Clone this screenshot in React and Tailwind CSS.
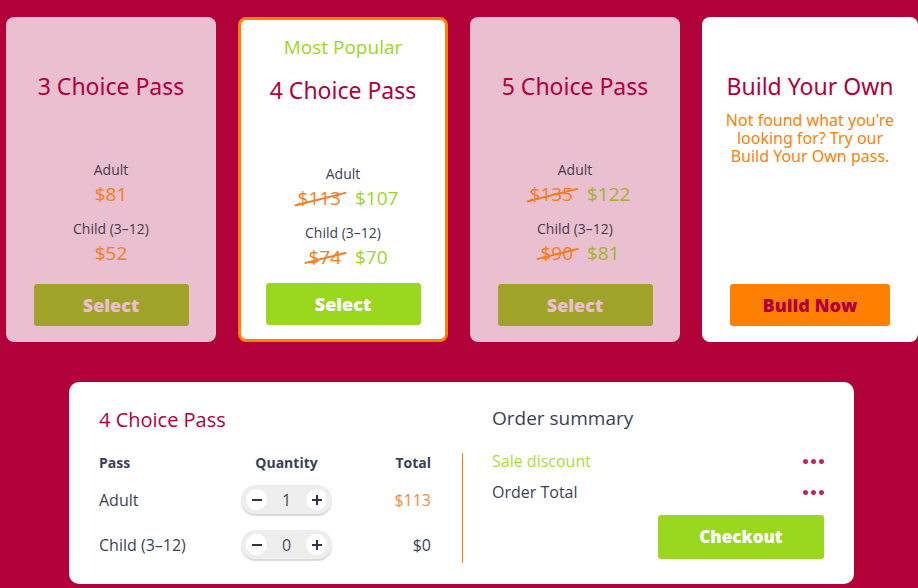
import React from 'react';

const body = { fontFamily: '"Open Sans", "Liberation Sans", sans-serif' };
const head = { fontFamily: '"Noto Sans", "Open Sans", sans-serif' };

const Struck = ({ children }) => (
    <span className="relative inline-block text-[#f57c20]">
        {children}
        <span className="absolute left-[-4px] right-[-6px] top-1/2 h-[2px] bg-[#f57c20] -rotate-[14deg]" />
    </span>
);

const PriceRow = ({ old, now, nowColor }) => (
    <div className={`flex items-center justify-center gap-[14px] text-[19px] leading-[24px] ${old ? 'pl-[10px]' : ''}`}>
        {old && <Struck>{old}</Struck>}
        <span className={nowColor}>{now}</span>
    </div>
);

const Stepper = ({ value }) => (
    <div className="w-[91px] h-[29px] rounded-full bg-[#eeeeee] shadow-[0_2px_1px_rgba(0,0,0,0.15)] flex items-center justify-between px-[5px]">
        <span className="w-[21px] h-[21px] rounded-full bg-white flex items-center justify-center">
            <span className="w-[10px] h-[2px] bg-[#2f3446]" />
        </span>
        <span className="text-[16px] text-[#4a4e63]">{value}</span>
        <span className="w-[21px] h-[21px] rounded-full bg-white flex items-center justify-center relative">
            <span className="w-[10px] h-[2px] bg-[#2f3446]" />
            <span className="absolute w-[2px] h-[10px] bg-[#2f3446]" />
        </span>
    </div>
);

const Dots = () => (
    <div className="flex gap-[3px]">
        <span className="w-[5px] h-[5px] rounded-full bg-[#c2255c]" />
        <span className="w-[5px] h-[5px] rounded-full bg-[#c2255c]" />
        <span className="w-[5px] h-[5px] rounded-full bg-[#c2255c]" />
    </div>
);

export default function App() {
    return (
        <div className="w-[918px] h-[588px] bg-[#b2003b] overflow-hidden" style={body}>
            <div className="flex gap-[22px] pl-[6px] pt-[17px]">
                {/* 3 Choice */}
                <div className="w-[210px] h-[325px] rounded-[8px] bg-[#eabfcf] flex flex-col items-center pt-[54px]">
                    <div className="text-[23px] leading-[30px] text-[#b2003b]" style={head}>3 Choice Pass</div>
                    <div className="mt-[60px] text-[14px] leading-[18px] text-[#4a3a4a]">Adult</div>
                    <div className="mt-[3px]"><PriceRow now="$81" nowColor="text-[#f57c20]" /></div>
                    <div className="mt-[14px] text-[14px] leading-[18px] text-[#4a3a4a]">Child (3–12)</div>
                    <div className="mt-[3px]"><PriceRow now="$52" nowColor="text-[#f57c20]" /></div>
                    <button className="mt-[19px] w-[155px] h-[42px] rounded-[3px] bg-[#a0a329] text-[#eac0cf] text-[18px] font-extrabold">Select</button>
                </div>

                {/* 4 Choice */}
                <div className="w-[210px] h-[325px] rounded-[8px] bg-white border-[3px] border-[#ff8000] flex flex-col items-center pt-[16px]">
                    <div className="text-[19px] leading-[22px] text-[#9ad81f]">Most Popular</div>
                    <div className="mt-[17px] text-[23px] leading-[30px] text-[#b2003b]" style={head}>4 Choice Pass</div>
                    <div className="mt-[60px] text-[14px] leading-[18px] text-[#3b3f55]">Adult</div>
                    <div className="mt-[3px]"><PriceRow old="$113" now="$107" nowColor="text-[#9ad81f]" /></div>
                    <div className="mt-[14px] text-[14px] leading-[18px] text-[#3b3f55]">Child (3–12)</div>
                    <div className="mt-[3px]"><PriceRow old="$74" now="$70" nowColor="text-[#9ad81f]" /></div>
                    <button className="mt-[14px] w-[155px] h-[42px] rounded-[3px] bg-[#9ad81f] text-white text-[18px] font-extrabold">Select</button>
                </div>

                {/* 5 Choice */}
                <div className="w-[210px] h-[325px] rounded-[8px] bg-[#eabfcf] flex flex-col items-center pt-[54px]">
                    <div className="text-[23px] leading-[30px] text-[#b2003b]" style={head}>5 Choice Pass</div>
                    <div className="mt-[60px] text-[14px] leading-[18px] text-[#4a3a4a]">Adult</div>
                    <div className="mt-[3px]"><PriceRow old="$135" now="$122" nowColor="text-[#a3b232]" /></div>
                    <div className="mt-[14px] text-[14px] leading-[18px] text-[#4a3a4a]">Child (3–12)</div>
                    <div className="mt-[3px]"><PriceRow old="$90" now="$81" nowColor="text-[#a3b232]" /></div>
                    <button className="mt-[19px] w-[155px] h-[42px] rounded-[3px] bg-[#a0a329] text-[#eac0cf] text-[18px] font-extrabold">Select</button>
                </div>

                {/* Build your own */}
                <div className="w-[216px] h-[325px] rounded-[8px] bg-white flex flex-col items-center pt-[54px] pb-[16px] shrink-0">
                    <div className="text-[23px] leading-[30px] text-[#b2003b]" style={head}>Build Your Own</div>
                    <div className="mt-[10px] text-[16px] leading-[18px] text-[#ff8000] text-center px-[14px]" style={head}>
                        Not found what you're looking for? Try our Build Your Own pass.
                    </div>
                    <button className="mt-auto w-[160px] h-[42px] rounded-[3px] bg-[#ff8000] text-[#b2003b] text-[18px] font-extrabold">Build Now</button>
                </div>
            </div>

            {/* Order panel */}
            <div className="mt-[40px] ml-[69px] w-[785px] h-[202px] rounded-[10px] bg-white flex items-start pl-[30px] pr-[30px]">
                <div className="w-[332px] pt-[25px]">
                    <div className="text-[20px] leading-[26px] text-[#b2003b]">4 Choice Pass</div>
                    <div className="mt-[21px] grid grid-cols-[142px_91px_99px] text-[14px] leading-[18px] font-bold text-[#3b3f55]">
                        <div>Pass</div>
                        <div className="text-center">Quantity</div>
                        <div className="text-right">Total</div>
                    </div>
                    <div className="mt-[13px] grid grid-cols-[142px_91px_99px] items-center text-[16px] text-[#3b3f55]">
                        <div>Adult</div>
                        <Stepper value="1" />
                        <div className="text-right text-[#f68a40]">$113</div>
                    </div>
                    <div className="mt-[16px] grid grid-cols-[142px_91px_99px] items-center text-[16px] text-[#3b3f55]">
                        <div>Child (3–12)</div>
                        <Stepper value="0" />
                        <div className="text-right">$0</div>
                    </div>
                </div>
                <div className="ml-[31px] mt-[71px] w-px h-[110px] bg-[#ff8000]" />
                <div className="ml-[29px] w-[332px] pt-[24px]">
                    <div className="text-[19px] leading-[24px] text-[#3b3f55]">Order summary</div>
                    <div className="mt-[21px] flex items-center justify-between text-[16px] leading-[20px]">
                        <span className="text-[#a8dc3a]">Sale discount</span>
                        <Dots />
                    </div>
                    <div className="mt-[11px] flex items-center justify-between text-[16px] leading-[20px]">
                        <span className="text-[#3b3f55]">Order Total</span>
                        <Dots />
                    </div>
                    <div className="mt-[13px] flex justify-end">
                        <button className="w-[166px] h-[44px] rounded-[3px] bg-[#9ad81f] text-white text-[17px] font-extrabold">Checkout</button>
                    </div>
                </div>
            </div>
        </div>
    );
}
